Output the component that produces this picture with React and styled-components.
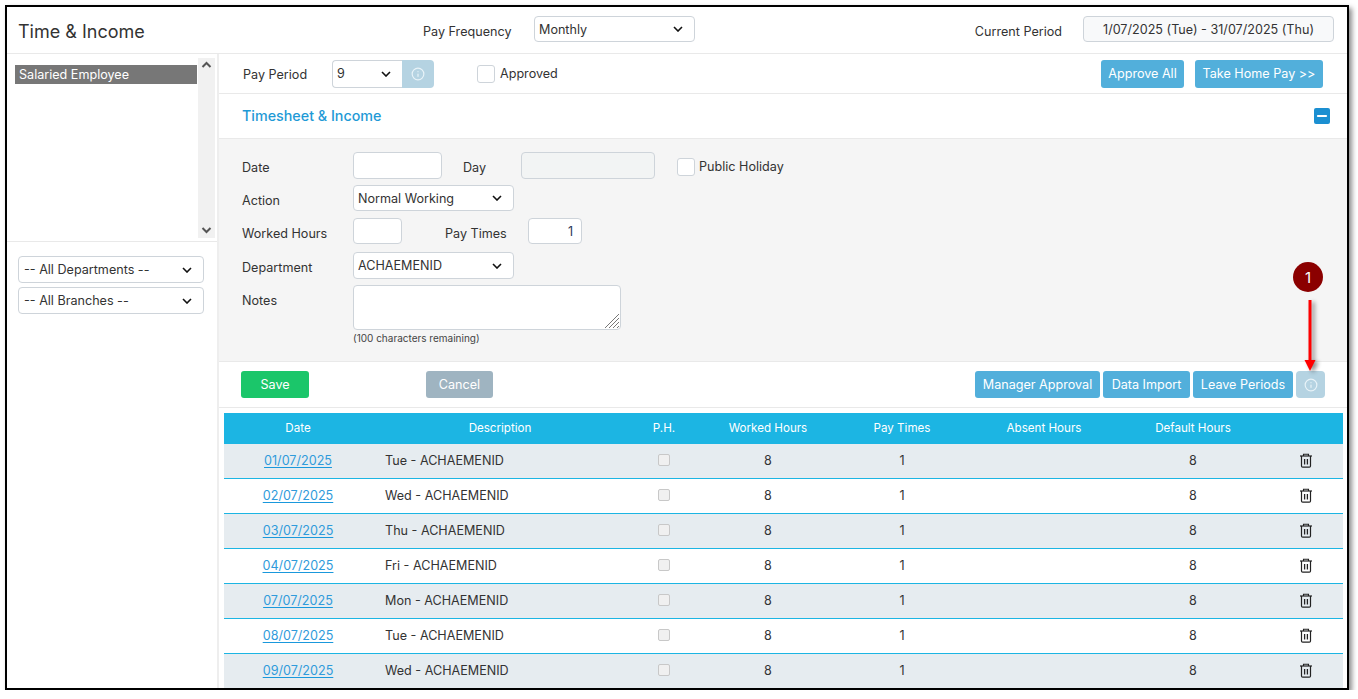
/**
 *
 * TimeAndIncome
 *
 */

import React from 'react'
import styled, { createGlobalStyle } from 'styled-components'
import { Info, Minus } from 'lucide-react'

const chevron = encodeURIComponent(
  '<svg xmlns="http://www.w3.org/2000/svg" width="10" height="6" viewBox="0 0 10 6"><path d="M1 1l4 4 4-4" fill="none" stroke="#111" stroke-width="1.6"/></svg>'
)

const GlobalStyle = createGlobalStyle`
  html, body {
    margin: 0;
    padding: 0;
    background: #fff;
    overflow: hidden;
  }
  * {
    box-sizing: border-box;
  }
  body, input, select, textarea, button {
    font-family: Inter, "Liberation Sans", sans-serif;
    font-size: 12.6px;
    color: #333;
  }
`

const Frame = styled.div`
  position: relative;
  margin: 5px 0 0 5px;
  width: 1344px;
  height: 685px;
  border: 2px solid #000;
  box-shadow: 3px 3px 5px rgba(0, 0, 0, 0.45);
  background: #fff;
  overflow: hidden;
`

const Page = styled.div`
  height: 100%;
  display: flex;
  flex-direction: column;
`

const Header = styled.header`
  height: 47px;
  flex: none;
  display: flex;
  align-items: center;
  border-bottom: 1px solid #e9e9e9;
  padding: 0 13px 2px 11px;
`

const Title = styled.h1`
  margin: 0;
  width: 405px;
  padding-top: 4px;
  font-size: 18px;
  font-weight: 400;
  color: #333;
`

const HeaderLabel = styled.span`
  padding-top: 5px;
  width: ${(p) => (p.$width ? `${p.$width}px` : 'auto')};
`

const Select = styled.select`
  appearance: none;
  height: ${(p) => p.$height || 27}px;
  width: ${(p) => p.$width}px;
  padding: 0 0 ${(p) => (p.$height === 26 ? 0 : 1)}px ${(p) => p.$pad || 4}px;
  background: #fff url("data:image/svg+xml,${chevron}") no-repeat right 11px center;
  border: 1px solid #ced4da;
  border-radius: 4px;
  outline: none;
`

const PeriodBox = styled.div`
  margin-left: 21px;
  width: 251px;
  height: 26px;
  display: flex;
  align-items: center;
  justify-content: center;
  background: #f8f9fa;
  border: 1px solid #ced4da;
  border-radius: 4px;
`

const Body = styled.div`
  flex: 1;
  min-height: 0;
  display: flex;
`

const Sidebar = styled.aside`
  width: 212px;
  flex: none;
  border-right: 2px solid #eee;
`

const ListPanel = styled.div`
  height: 188px;
  padding: 4px 2px 3px 8px;
  display: flex;
  border-bottom: 1px solid #e9e9e9;
`

const List = styled.div`
  flex: 1;
  padding-top: 7px;
`

const ListItem = styled.div`
  height: 19px;
  line-height: 19px;
  padding-left: 4px;
  background: #777;
  color: #fff;
`

const ScrollTrack = styled.div`
  width: 17px;
  margin-left: 1px;
  background: #f1f1f1;
  display: flex;
  flex-direction: column;
  justify-content: space-between;
  align-items: center;
  padding: 3px 0 4px;
`

const Filters = styled.div`
  padding: 14px 14px 0 11px;
  display: flex;
  flex-direction: column;
  gap: 4px;
`

const Main = styled.main`
  flex: 1;
  min-width: 0;
  display: flex;
  flex-direction: column;
`

const PayRow = styled.div`
  height: 40px;
  flex: none;
  display: flex;
  align-items: center;
  padding: 0 24px;
  border-bottom: 1px solid #e9e9e9;
`

const PayLabel = styled.span`
  width: 89px;
  padding-top: 2px;
`

const InputGroup = styled.div`
  display: flex;
`

const GroupSelect = styled(Select)`
  border-radius: 4px 0 0 4px;
  border-right: none;
`

const InfoButton = styled.button`
  width: ${(p) => p.$width}px;
  height: ${(p) => p.$height}px;
  padding: 0;
  border: none;
  border-radius: ${(p) => (p.$joined ? '0 4px 4px 0' : '4px')};
  background: #b5d3e2;
  color: #e8f3f8;
  display: flex;
  align-items: center;
  justify-content: center;
`

const CheckLabel = styled.label`
  display: flex;
  align-items: center;
  gap: ${(p) => p.$gap || 5}px;
  margin-left: ${(p) => p.$left}px;
  margin-top: ${(p) => p.$top || 0}px;
`

const HolidayText = styled.span`
  margin-top: -2px;
`

const Check = styled.input.attrs({ type: 'checkbox' })`
  appearance: none;
  margin: 0;
  width: 18px;
  height: 18px;
  background: #fff;
  border: 1px solid #ced4da;
  border-radius: 3px;
`

const Spacer = styled.div`
  flex: 1;
`

const Button = styled.button`
  height: ${(p) => p.$height || 27}px;
  width: ${(p) => p.$width}px;
  margin-left: ${(p) => p.$left || 0}px;
  padding: 0 0 1px;
  border: none;
  border-radius: 3px;
  background: ${(p) => p.$color || '#52afdb'};
  color: #fff;
`

const SectionHead = styled.div`
  height: 45px;
  flex: none;
  display: flex;
  align-items: center;
  justify-content: space-between;
  padding: 0 17px 0 23px;
  border-bottom: 1px solid #e9e9e9;
`

const SectionTitle = styled.h2`
  margin: 0;
  padding-bottom: 2px;
  font-size: 14.3px;
  font-weight: 500;
  color: #1f9ad6;
`

const Collapse = styled.span`
  width: 16px;
  height: 16px;
  border-radius: 2px;
  background: #1b8fd1;
  color: #fff;
  display: flex;
  align-items: center;
  justify-content: center;
`

const Form = styled.div`
  height: 223px;
  flex: none;
  background: #f5f5f5;
  padding: 13px 0 0 23px;
  border-bottom: 1px solid #e9e9e9;
`

const FormRow = styled.div`
  display: flex;
  align-items: flex-start;
  margin-bottom: ${(p) => p.$gap}px;
`

const FieldLabel = styled.label`
  width: ${(p) => p.$width || 111}px;
  margin-left: ${(p) => p.$left || 0}px;
  padding-top: 8px;
  flex: none;
`

const Input = styled.input`
  width: ${(p) => p.$width}px;
  height: ${(p) => p.$height || 26}px;
  padding: 0 8px;
  text-align: ${(p) => p.$align || 'left'};
  background: ${(p) => (p.disabled ? '#f2f4f4' : '#fff')};
  border: 1px solid #ced4da;
  border-radius: 4px;
  color: #2a3a5a;
  outline: none;
`

const NotesWrap = styled.div`
  position: relative;
  width: 268px;
  height: 45px;
`

const Notes = styled.textarea`
  display: block;
  width: 100%;
  height: 100%;
  resize: none;
  background: #fff;
  border: 1px solid #ced4da;
  border-radius: 4px;
  outline: none;
`

const Grip = styled.svg`
  position: absolute;
  right: 2px;
  bottom: 2px;
`

const Hint = styled.div`
  margin: 2px 0 0 111px;
  font-size: 10px;
  line-height: 12px;
  color: #444;
`

const ActionBar = styled.div`
  height: 46px;
  flex: none;
  display: flex;
  align-items: center;
  gap: 3px;
  padding: 0 22px;
  border-bottom: 1px solid #e9e9e9;
`

const Table = styled.table`
  margin: 5px 0 0 5px;
  width: 1119px;
  table-layout: fixed;
  border-collapse: separate;
  border-spacing: 0;
`

const HeadCell = styled.th`
  height: 31px;
  padding: 0 0 2px;
  font-size: 11.6px;
  font-weight: 400;
  color: #fff;
  background: #1cb5e3;
  text-align: center;
`

const Row = styled.tr`
  background: ${(p) => (p.$alt ? '#e6ecf0' : '#fff')};
`

const Cell = styled.td`
  height: 35px;
  padding: 0 0 2px ${(p) => p.$pad || 0}px;
  text-align: ${(p) => p.$align || 'center'};
  border-bottom: 1px solid #1cb5e3;
`

const DateLink = styled.a`
  color: #2f9bdb;
  text-decoration: underline;
  text-decoration-color: #1a98dc;
  text-underline-offset: 2px;
`

const RowCheck = styled.input.attrs({ type: 'checkbox', disabled: true })`
  appearance: none;
  display: block;
  margin: 0 auto;
  width: 12px;
  height: 12px;
  background: #f0f0f0;
  border: 1px solid #c8c8c8;
  border-radius: 2px;
`

const TrashIcon = styled.svg`
  display: block;
  margin: 0 auto;
  transform: translateX(1px);
`

const Badge = styled.div`
  position: absolute;
  left: 1286px;
  top: 255px;
  width: 30px;
  height: 30px;
  border-radius: 50%;
  background: #8b0000;
  color: #fff;
  font-size: 15px;
  display: flex;
  align-items: center;
  justify-content: center;
`

const Arrow = styled.svg`
  position: absolute;
  left: 1295px;
  top: 293px;
  filter: drop-shadow(3px 2px 2px rgba(0, 0, 0, 0.45));
`

const rows = [
  ['01/07/2025', 'Tue'],
  ['02/07/2025', 'Wed'],
  ['03/07/2025', 'Thu'],
  ['04/07/2025', 'Fri'],
  ['07/07/2025', 'Mon'],
  ['08/07/2025', 'Tue'],
  ['09/07/2025', 'Wed'],
]

const columns = [148, 256, 72, 136, 132, 152, 146, 77]

const headings = [
  'Date',
  'Description',
  'P.H.',
  'Worked Hours',
  'Pay Times',
  'Absent Hours',
  'Default Hours',
  '',
]

function ChevronUpMark() {
  return (
    <svg width="11" height="8" viewBox="0 0 11 8">
      <path d="M1.5 6L5.5 2l4 4" fill="none" stroke="#555" strokeWidth="2" />
    </svg>
  )
}

function ChevronDownMark() {
  return (
    <svg width="11" height="8" viewBox="0 0 11 8">
      <path d="M1.5 2l4 4 4-4" fill="none" stroke="#555" strokeWidth="2" />
    </svg>
  )
}

function Trash() {
  return (
    <TrashIcon width="14" height="15" viewBox="0 0 14 15" fill="none" stroke="#222">
      <path d="M1 3h12" strokeWidth="1.2" />
      <path d="M4.5 3V1.2h5V3" strokeWidth="1.1" />
      <path d="M2.5 3v10a1.2 1.2 0 0 0 1.2 1.2h6.6a1.2 1.2 0 0 0 1.2-1.2V3" strokeWidth="1.2" />
      <path d="M5.6 6v5.5M8.4 6v5.5" strokeWidth="1.3" />
    </TrashIcon>
  )
}

function App() {
  return (
    <Frame>
      <GlobalStyle />
      <Page>
        <Header>
          <Title>Time &amp; Income</Title>
          <HeaderLabel $width={111}>Pay Frequency</HeaderLabel>
          <Select $width={161} $height={26} defaultValue="Monthly">
            <option>Monthly</option>
          </Select>
          <Spacer />
          <HeaderLabel>Current Period</HeaderLabel>
          <PeriodBox>1/07/2025 (Tue) - 31/07/2025 (Thu)</PeriodBox>
        </Header>
        <Body>
          <Sidebar>
            <ListPanel>
              <List>
                <ListItem>Salaried Employee</ListItem>
              </List>
              <ScrollTrack>
                <ChevronUpMark />
                <ChevronDownMark />
              </ScrollTrack>
            </ListPanel>
            <Filters>
              <Select $width={186} $pad={5} defaultValue="all">
                <option value="all">-- All Departments --</option>
              </Select>
              <Select $width={186} $pad={5} defaultValue="all">
                <option value="all">-- All Branches --</option>
              </Select>
            </Filters>
          </Sidebar>
          <Main>
            <PayRow>
              <PayLabel>Pay Period</PayLabel>
              <InputGroup>
                <GroupSelect $width={70} $height={28} defaultValue="9">
                  <option>9</option>
                </GroupSelect>
                <InfoButton $width={32} $height={28} $joined>
                  <Info size={14} />
                </InfoButton>
              </InputGroup>
              <CheckLabel $left={43}>
                <Check />
                Approved
              </CheckLabel>
              <Spacer />
              <Button $width={83} $height={28}>Approve All</Button>
              <Button $width={128} $height={28} $left={11}>Take Home Pay &gt;&gt;</Button>
            </PayRow>
            <SectionHead>
              <SectionTitle>Timesheet &amp; Income</SectionTitle>
              <Collapse>
                <Minus size={14} strokeWidth={3.5} />
              </Collapse>
            </SectionHead>
            <Form>
              <FormRow $gap={6}>
                <FieldLabel>Date</FieldLabel>
                <Input $width={89} $height={27} />
                <FieldLabel $width={58} $left={21}>Day</FieldLabel>
                <Input $width={134} $height={27} disabled />
                <CheckLabel $left={22} $top={6} $gap={4}>
                  <Check />
                  <HolidayText>Public Holiday</HolidayText>
                </CheckLabel>
              </FormRow>
              <FormRow $gap={7}>
                <FieldLabel>Action</FieldLabel>
                <Select $width={161} $height={26} defaultValue="Normal Working">
                  <option>Normal Working</option>
                </Select>
              </FormRow>
              <FormRow $gap={8}>
                <FieldLabel>Worked Hours</FieldLabel>
                <Input $width={49} />
                <FieldLabel $width={83} $left={43}>Pay Times</FieldLabel>
                <Input $width={54} $align="right" defaultValue="1" />
              </FormRow>
              <FormRow $gap={6}>
                <FieldLabel>Department</FieldLabel>
                <Select $width={161} defaultValue="ACHAEMENID">
                  <option>ACHAEMENID</option>
                </Select>
              </FormRow>
              <FormRow $gap={0}>
                <FieldLabel>Notes</FieldLabel>
                <NotesWrap>
                  <Notes />
                  <Grip width="14" height="14" viewBox="0 0 14 14" stroke="#777" strokeWidth="1">
                    <path d="M0 14L14 0M4 14L14 4M8 14l6-6M12 14l2-2" />
                  </Grip>
                </NotesWrap>
              </FormRow>
              <Hint>(100 characters remaining)</Hint>
            </Form>
            <ActionBar>
              <Button $width={68} $color="#1bc66a">Save</Button>
              <Button $width={67} $left={114} $color="#9fb4c1">Cancel</Button>
              <Spacer />
              <Button $width={125}>Manager Approval</Button>
              <Button $width={87}>Data Import</Button>
              <Button $width={100}>Leave Periods</Button>
              <InfoButton $width={29} $height={27}>
                <Info size={14} />
              </InfoButton>
            </ActionBar>
            <Table>
              <colgroup>
                {columns.map((width, i) => (
                  <col key={i} style={{ width }} />
                ))}
              </colgroup>
              <thead>
                <tr>
                  {headings.map((text, i) => (
                    <HeadCell key={i}>{text}</HeadCell>
                  ))}
                </tr>
              </thead>
              <tbody>
                {rows.map(([date, day], i) => (
                  <Row key={date} $alt={i % 2 === 0}>
                    <Cell><DateLink href="#">{date}</DateLink></Cell>
                    <Cell $align="left" $pad={13}>{day} - ACHAEMENID</Cell>
                    <Cell><RowCheck /></Cell>
                    <Cell>8</Cell>
                    <Cell>1</Cell>
                    <Cell />
                    <Cell>8</Cell>
                    <Cell><Trash /></Cell>
                  </Row>
                ))}
              </tbody>
            </Table>
          </Main>
        </Body>
      </Page>
      <Badge>1</Badge>
      <Arrow width="16" height="74" viewBox="0 0 16 74">
        <path d="M6.5 0h3v62h-3z" fill="#f00" />
        <path d="M2.5 60h11L8 71z" fill="#f00" />
      </Arrow>
    </Frame>
  )
}

export default App
